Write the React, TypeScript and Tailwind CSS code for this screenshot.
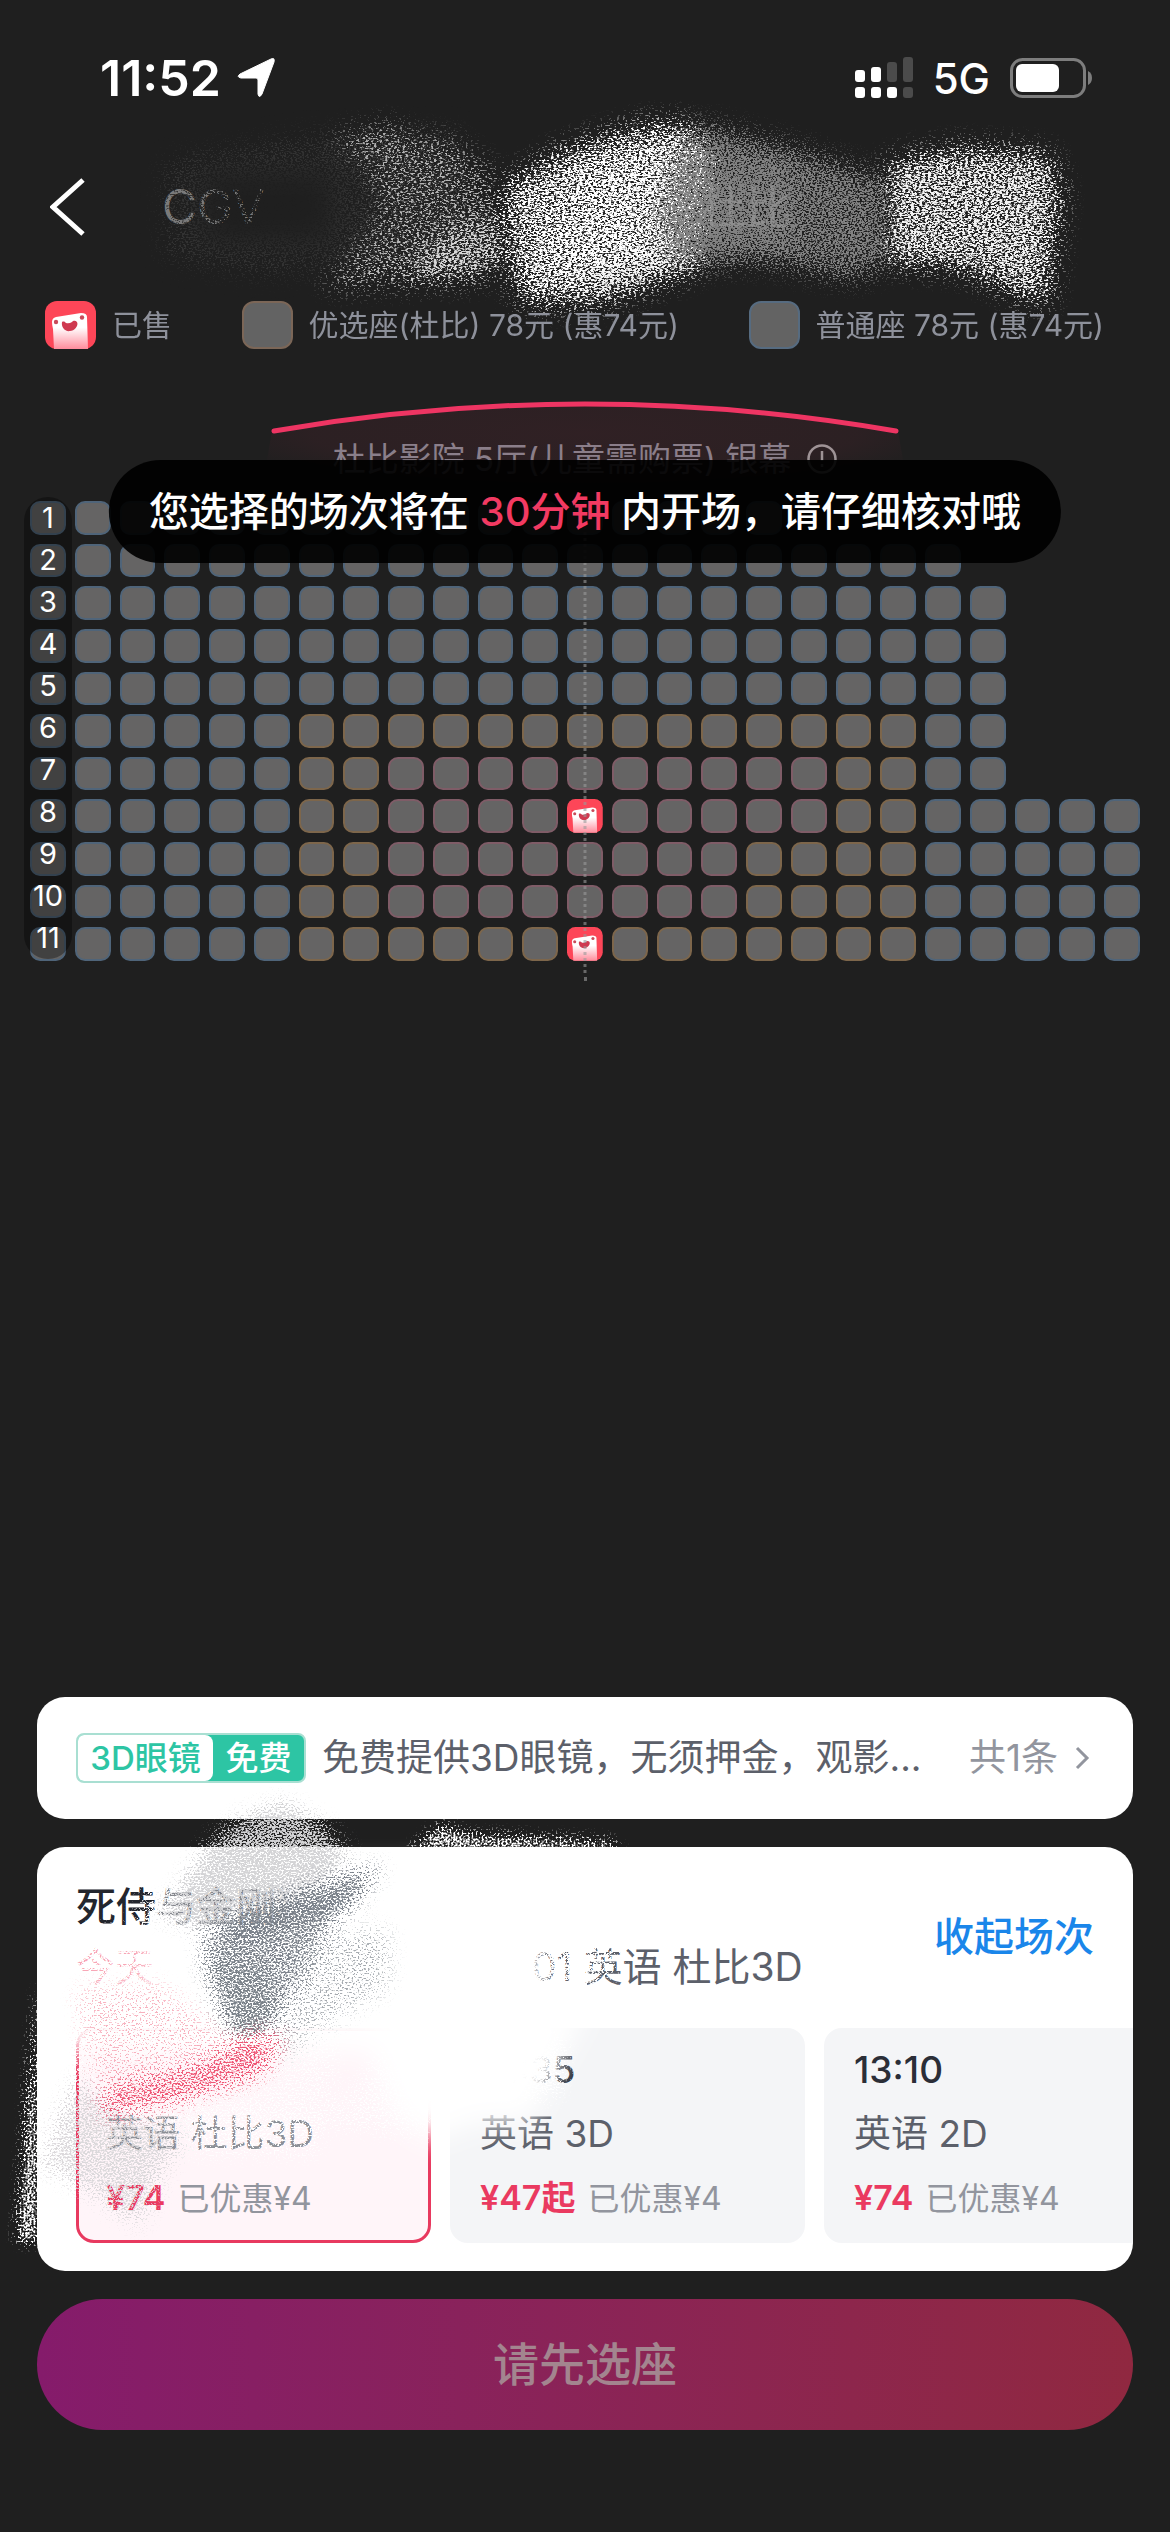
import { useState } from 'react';

type Zone = 'normal' | 'prime' | 'best';

const zoneBorder: Record<Zone, string> = {
  normal: 'border-[#4f6479]',
  prime: 'border-[#7d664b]',
  best: 'border-[#7f5c67]',
};

// last = number of seats in the row, prime / best = [first, last] column of the zone
const rows: { last: number; prime?: number[]; best?: number[]; sold?: number }[] = [
  { last: 16 },
  { last: 20 },
  { last: 21 },
  { last: 21 },
  { last: 21 },
  { last: 21, prime: [6, 19] },
  { last: 21, prime: [6, 19], best: [8, 17] },
  { last: 24, prime: [6, 19], best: [8, 17], sold: 12 },
  { last: 24, prime: [6, 19], best: [8, 15] },
  { last: 24, prime: [6, 19], best: [8, 15] },
  { last: 24, prime: [6, 19], sold: 12 },
];

const sessions = [
  { id: 1, time: '', type: '英语 杜比3D', price: '¥74', off: '已优惠¥4' },
  { id: 2, time: '12:35', type: '英语 3D', price: '¥47起', off: '已优惠¥4' },
  { id: 3, time: '13:10', type: '英语 2D', price: '¥74', off: '已优惠¥4' },
];

const inside = (col: number, range?: number[]) => !!range && col >= range[0] && col <= range[1];

function SoldIcon({ id }: { id: string }) {
  return (
    <svg viewBox="0 0 51 48" preserveAspectRatio="none" className="block h-full w-full">
      <defs>
        <linearGradient id={id} x1="0" y1="0" x2="0" y2="1">
          <stop offset="0.4" stopColor="#fff" />
          <stop offset="1" stopColor="#ff8c9c" />
        </linearGradient>
      </defs>
      <rect width="51" height="48" rx="12" fill="#fd4658" />
      <path d="M7 21q0-4 4-5l25-4q6 0 6 4l1 32H9l-1-20q-1-4-1-7z" fill={`url(#${id})`} />
      <circle cx="11" cy="21" r="2.200" fill="#c94a5a" />
      <circle cx="37" cy="16.500" r="2.200" fill="#c94a5a" />
      <path
        d="M17 21c2-1 3 0 4 1q3 1 6-1c1-1 3-2 5 0 2 4-3 9-7 9-5 1-9-4-8-9z"
        fill="#cf3a50"
      />
    </svg>
  );
}

function GrainFilter({ id, freq, blur, seed }: { id: string; freq: string; blur: number; seed: number }) {
  return (
    <filter id={id} x="-15%" y="-30%" width="130%" height="160%" colorInterpolationFilters="sRGB">
      <feGaussianBlur in="SourceGraphic" stdDeviation={blur} result="soft" />
      <feTurbulence type="fractalNoise" baseFrequency={freq} numOctaves="3" seed={seed} />
      <feColorMatrix values="0 0 0 0 0  0 0 0 0 0  0 0 0 0 0  0 0 0 2.8 -0.9" result="noise" />
      <feComposite in="soft" in2="noise" operator="arithmetic" k2="1" k3="1" k4="-1" />
      <feColorMatrix values="0 0 0 0 0  0 0 0 0 0  0 0 0 0 0  0 0 0 2.600 0" result="grain" />
      <feColorMatrix in="soft" values="1 0 0 0 0  0 1 0 0 0  0 0 1 0 0  0 0 0 30 0" />
      <feComposite in2="grain" operator="in" />
    </filter>
  );
}

function StatusBar() {
  return (
    <div className="flex h-[156px] items-center justify-between pr-[76px] pl-[100px]">
      <div className="flex items-center gap-4 text-[50px] font-semibold">
        <span>11:52</span>
        <svg viewBox="0 0 38 40" className="h-10 w-[38px]">
          <path
            d="M34 1q4-2 3 3L25 36q-3 5-4 0V22q0-2-2-2H4q-5-1-1-4z"
            fill="#fff"
            stroke="#fff"
            strokeLinejoin="round"
          />
        </svg>
      </div>
      <div className="flex items-center">
        <svg viewBox="0 0 58 42" className="h-[42px] w-[58px]" fill="#fff">
          <rect x="0" y="13" width="10" height="12" rx="3" />
          <rect x="16" y="10" width="10" height="15" rx="3" />
          <rect x="32" y="5" width="10" height="20" rx="3" fill="#4b4b4b" />
          <rect x="48" y="0" width="10" height="25" rx="3" fill="#4b4b4b" />
          <rect x="0" y="30" width="10" height="11" rx="3" />
          <rect x="16" y="30" width="10" height="11" rx="3" />
          <rect x="32" y="30" width="10" height="11" rx="3" />
          <rect x="48" y="30" width="10" height="11" rx="3" fill="#4b4b4b" />
        </svg>
        <span className="ml-5 text-[42px] font-medium">5G</span>
        <svg viewBox="0 0 84 40" className="ml-5 h-10 w-[84px]">
          <rect x="1.500" y="1.500" width="73" height="37" rx="11" fill="none" stroke="#7d7d7d" strokeWidth="3" />
          <rect x="6" y="6" width="43" height="28" rx="6" fill="#fff" />
          <path d="M78 13q4 2 4 7t-4 7z" fill="#7d7d7d" />
        </svg>
      </div>
    </div>
  );
}

function Header() {
  return (
    <header className="relative flex h-[102px] items-center pl-[50px]">
      <button type="button" aria-label="返回" className="z-10">
        <svg viewBox="0 0 36 58" className="h-[58px] w-9">
          <path d="M33 2L3 29l30 27" fill="none" stroke="#fff" strokeWidth="5" />
        </svg>
      </button>
      <h1 className="ml-[76px] text-5xl text-[#7a7a7a]">CGV</h1>
      <svg viewBox="0 0 1170 240" className="pointer-events-none absolute -top-14 left-0 w-full">
        <defs>
          <GrainFilter id="grainTop" freq="0.35 0.6" blur={12} seed={4} />
          <GrainFilter id="grainTopSoft" freq="0.45 0.7" blur={12} seed={9} />
        </defs>
        <g filter="url(#grainTopSoft)">
          <path d="M165 60L300 35L460 30L480 160L260 175L165 160z" fill="#333" opacity="0.55" />
          <path d="M205 75L330 75L330 140L205 140z" fill="#1f1f1f" />
          <path d="M235 75L300 75L300 140L235 140z" fill="#1f1f1f" />
        </g>
        <g filter="url(#grainTop)">
          <path d="M360 58L400 35L450 36L500 75L520 160L480 180L320 184L340 165L380 110z" fill="#b4b4b4" opacity="0.46" />
          <path d="M420 150L490 110L510 160L480 178L400 182z" fill="#eee" opacity="0.45" />
          <path d="M320 178L390 172L480 165L480 180L330 188z" fill="#ddd" opacity="0.35" />
          <path d="M330 36L395 24L410 40L350 58z" fill="#aaa" opacity="0.6" />
        </g>
        <g filter="url(#grainTop)">
          <path d="M500 85L560 50L640 24L690 22L720 55L700 168L640 184L580 206L518 204L505 150z" fill="#fff" opacity="0.76" />
          <path d="M570 75L680 40L665 165L540 172z" fill="#fff" opacity="0.45" />
          <path d="M575 200L600 165L730 155L690 175L600 208z" fill="#e6e6e6" opacity="0.5" />
          <path d="M885 60L960 46L1050 52L1062 90L1050 204L1030 202L960 170L885 165z" fill="#f4f4f4" opacity="0.76" />
        </g>
        <g filter="url(#grainTopSoft)">
          <path d="M680 30L710 24L790 46L890 78L890 168L850 180L760 162L700 168L660 158L650 110z" fill="#828282" opacity="0.8" />
          <path d="M680 60L790 60L790 150L670 155z" fill="#828282" opacity="0.75" />
        </g>
        <text x="700" y="124" fontSize="46" fill="#979797" opacity="0.6">
          杜比
        </text>
      </svg>
    </header>
  );
}

function Legend() {
  return (
    <div className="relative z-10 flex h-[134px] items-center justify-between pr-[66px] pl-[45px] text-3xl text-[#8e919b]">
      <div className="flex items-center gap-4">
        <span className="h-12 w-[51px]">
          <SoldIcon id="soldLegend" />
        </span>
        已售
      </div>
      <div className="flex items-center gap-4">
        <span className="h-12 w-[51px] rounded-xl border-2 border-[#7b6657] bg-[#636363]" />
        优选座(杜比) 78元 (惠74元)
      </div>
      <div className="flex items-center gap-4">
        <span className="h-12 w-[51px] rounded-xl border-2 border-[#566b80] bg-[#636363]" />
        普通座 78元 (惠74元)
      </div>
    </div>
  );
}

function SeatMap() {
  return (
    <section className="relative">
      <svg viewBox="0 0 1170 110" className="pointer-events-none absolute top-0 left-0 w-full">
        <defs>
          <radialGradient id="glow" cx="0.5" cy="0.3" r="0.6">
            <stop offset="0" stopColor="#f4315f" stopOpacity="0.08" />
            <stop offset="0.7" stopColor="#f4315f" stopOpacity="0.06" />
            <stop offset="1" stopColor="#f4315f" stopOpacity="0" />
          </radialGradient>
        </defs>
        <path d="M272 39Q585-15 898 39L910 108H260z" fill="url(#glow)" />
        <path d="M274 39Q585-15 896 39" fill="none" stroke="#ee3563" strokeWidth="5" strokeLinecap="round" />
      </svg>
      <div className="flex items-center justify-center gap-4 pt-[50px] text-[33px] leading-[34px] text-[#83848d]">
        <span>杜比影院 5厅(儿童需购票) 银幕</span>
        <svg viewBox="0 0 30 30" className="h-[30px] w-[30px]">
          <circle cx="15" cy="15" r="13.500" fill="none" stroke="#999" strokeWidth="2.500" />
          <path d="M15 7v10M15 20v3" stroke="#999" strokeWidth="2.500" />
        </svg>
      </div>

      <div className="relative mt-[25px] px-[30px]">
        <div className="grid h-[460px] grid-cols-[repeat(25,minmax(0,1fr))] grid-rows-11 gap-[9px]">
          {rows.map((row, r) =>
            Array.from({ length: 25 }, (_, col) => {
              if (col > row.last) return <span key={`${r}-${col}`} />;
              if (col === row.sold) {
                return (
                  <span key={`${r}-${col}`}>
                    <SoldIcon id={`sold${r}`} />
                  </span>
                );
              }
              const zone: Zone = inside(col, row.best) ? 'best' : inside(col, row.prime) ? 'prime' : 'normal';
              return (
                <button
                  key={`${r}-${col}`}
                  type="button"
                  disabled
                  aria-label={`${r + 1}排${col}座`}
                  className={`rounded-[10px] border-2 bg-[#656464] ${zoneBorder[zone]}`}
                />
              );
            })
          )}
        </div>
        {/* row numbers */}
        <ol className="absolute -top-1 left-6 flex w-12 flex-col rounded-3xl bg-black/35 text-center text-[29px]">
          {rows.map((_, r) => (
            <li key={r} className="h-[42px] leading-[42px]">
              {r + 1}
            </li>
          ))}
        </ol>
        {/* centre line */}
        <div className="absolute top-0 -bottom-5 left-1/2 -translate-x-1/2 border-l-3 border-dotted border-[#9a9a9a]/60" />
      </div>

      <div
        role="status"
        className="absolute top-[68px] left-1/2 flex h-[103px] -translate-x-1/2 items-center rounded-full bg-black/92 px-10 text-[40px] font-medium whitespace-pre"
      >
        您选择的场次将在 <span className="text-[#f23a62]">30分钟</span> 内开场，请仔细核对哦
      </div>
    </section>
  );
}

function Smudges() {
  return (
    <svg viewBox="0 0 1170 600" className="pointer-events-none absolute top-0 left-0 w-full">
      <defs>
        <GrainFilter id="grainCard" freq="0.5 0.6" blur={10} seed={12} />
        <GrainFilter id="grainEdge" freq="0.5 0.5" blur={6} seed={2} />
        <filter id="wipe" x="-10%" y="-10%" width="120%" height="120%">
          <feGaussianBlur stdDeviation="13" />
        </filter>
      </defs>
      <g filter="url(#wipe)" fill="#fff">
        <path d="M275 175L520 170L545 310L590 310L565 355L530 425L480 425L430 445L395 420L370 355L60 355L60 300L160 290L150 240L275 235z" />
      </g>
      <g filter="url(#grainCard)" fill="#fff">
        <path d="M70 235L180 235L180 300L70 300z" opacity="0.8" />
        <path d="M60 320L340 320L330 420L420 300L430 440L310 430L160 430L60 460z" opacity="0.5" />
        <path d="M500 230L630 230L600 295L500 295z" opacity="0.85" />
        <path d="M480 340L565 340L560 400L480 400z" opacity="0.8" />
        <path d="M150 185L300 185L300 240L135 240z" opacity="0.8" />
        <path d="M90 420L320 420L320 460L90 460z" opacity="0.5" />
      </g>
      <g filter="url(#grainEdge)">
        <path d="M405 156L440 126L470 136L610 142L625 156z" fill="#fff" opacity="0.75" />
        <path d="M37 290L39 290L39 548L16 545L26 400z" fill="#fff" opacity="0.8" />
      </g>
      <g filter="url(#grainCard)">
        <path d="M170 205L205 150L245 118L285 104L325 128L350 160L325 195L260 225L205 235L150 215z" fill="#d3d3d6" opacity="0.85" />
        <path d="M75 380L130 410L190 440L165 470L140 530L80 490L40 470L55 425z" fill="#dcd8dc" opacity="0.7" />
        <path d="M260 330L310 330L290 365L270 360z" fill="#d4d5d8" opacity="0.6" />
      </g>
      <g filter="url(#grainCard)">
        <path d="M385 168L355 205L320 240L300 285L255 352L225 335L205 275L200 235L250 212L320 188z" fill="#7b818a" opacity="0.66" />
        <path d="M385 168L350 210L235 250L215 222L320 185z" fill="#7b818a" opacity="0.7" />
        <path d="M205 260L260 260L290 330L240 350z" fill="#7b818a" opacity="0.4" />
        <path d="M300 240L390 230L390 290L290 350z" fill="#999da4" opacity="0.34" />
      </g>
      <g filter="url(#grainCard)">
        <path d="M285 338L265 378L180 405L100 422L105 390L190 372L250 335z" fill="#ef5674" opacity="0.68" />
        <path d="M75 290L160 285L230 340L190 370L90 390z" fill="#f58ba0" opacity="0.26" />
      </g>
    </svg>
  );
}

export default function App() {
  const [selected, setSelected] = useState(1);

  return (
    <div className="flex min-h-screen flex-col overflow-hidden bg-[#1f1f1f] font-['Inter','Noto_Sans_CJK_SC',sans-serif] text-white">
      <StatusBar />
      <Header />
      <Legend />
      <SeatMap />

      <div className="relative mt-auto flex flex-col gap-7 px-[37px] pb-[102px]">
        {/* glasses notice */}
        <div className="flex h-[122px] items-center rounded-[28px] bg-white px-[39px]">
          <div className="flex h-[50px] w-[230px] shrink-0 overflow-hidden rounded-lg border-2 border-[#a9dfd2] bg-[#2dc5a4] text-[33px] leading-[46px] whitespace-nowrap">
            <span className="w-[135px] rounded-r-lg bg-white text-center font-medium text-[#2dc5a4]">3D眼镜</span>
            <span className="flex-1 text-center font-medium">免费</span>
          </div>
          <p className="ml-4 flex-1 text-[37px] whitespace-nowrap text-[#5c606a]">
            免费提供3D眼镜，无须押金，观影...
          </p>
          <a href="#notice" className="flex items-center gap-4 text-[37px] whitespace-nowrap text-[#92959e]">
            共1条
            <svg viewBox="0 0 16 24" className="mr-1 h-6 w-4">
              <path d="M3 2l10 10L3 22" fill="none" stroke="#92959e" strokeWidth="3" />
            </svg>
          </a>
        </div>

        {/* sessions */}
        <section className="h-[424px] overflow-hidden rounded-[28px] bg-white pt-[30px] pl-[39px]">
          <div className="flex items-center justify-between pr-[39px]">
            <div>
              <h2 className="text-[40px] leading-[60px] font-medium text-[#23262e]">
                死侍<span className="text-[#85888e]">与金刚狼</span>
              </h2>
              <p className="flex text-[39px] leading-[60px] text-[#5c606a]">
                <span className="w-[456px] text-[#f8a5b5]">今天</span>
                <span>01 英语 杜比3D</span>
              </p>
            </div>
            <button type="button" className="text-[40px] font-medium text-[#1a86ea]">
              收起场次
            </button>
          </div>
          <div className="mt-[31px] flex gap-[19px]">
            {sessions.map((s) => (
              <button
                key={s.id}
                type="button"
                onClick={() => setSelected(s.id)}
                className={`flex h-[215px] w-[355px] shrink-0 flex-col items-start rounded-[18px] border-3 px-[27px] pt-[9px] ${
                  selected === s.id ? 'border-[#e8395f] bg-[#fff5f9]' : 'border-[#f4f5f7] bg-[#f4f5f7]'
                }`}
              >
                <span className="h-[60px] text-[37px] leading-[60px] font-medium text-[#2b2e37]">{s.time}</span>
                <span
                  className={`text-[37px] leading-[68px] ${selected === s.id ? 'text-[#8d9097]' : 'text-[#5c606a]'}`}
                >
                  {s.type}
                </span>
                <span className="flex items-baseline gap-3 leading-[60px]">
                  <b className="text-[34px] font-semibold text-[#ea3a60]">{s.price}</b>
                  <span className="text-[32px] text-[#92959e]">{s.off}</span>
                </span>
              </button>
            ))}
          </div>
        </section>

        <button
          type="button"
          disabled
          className="h-[131px] rounded-full bg-linear-to-r from-[#851b6b] to-[#902840] text-[46px] font-medium text-[#a3858f]"
        >
          请先选座
        </button>

        <Smudges />
      </div>
    </div>
  );
}
